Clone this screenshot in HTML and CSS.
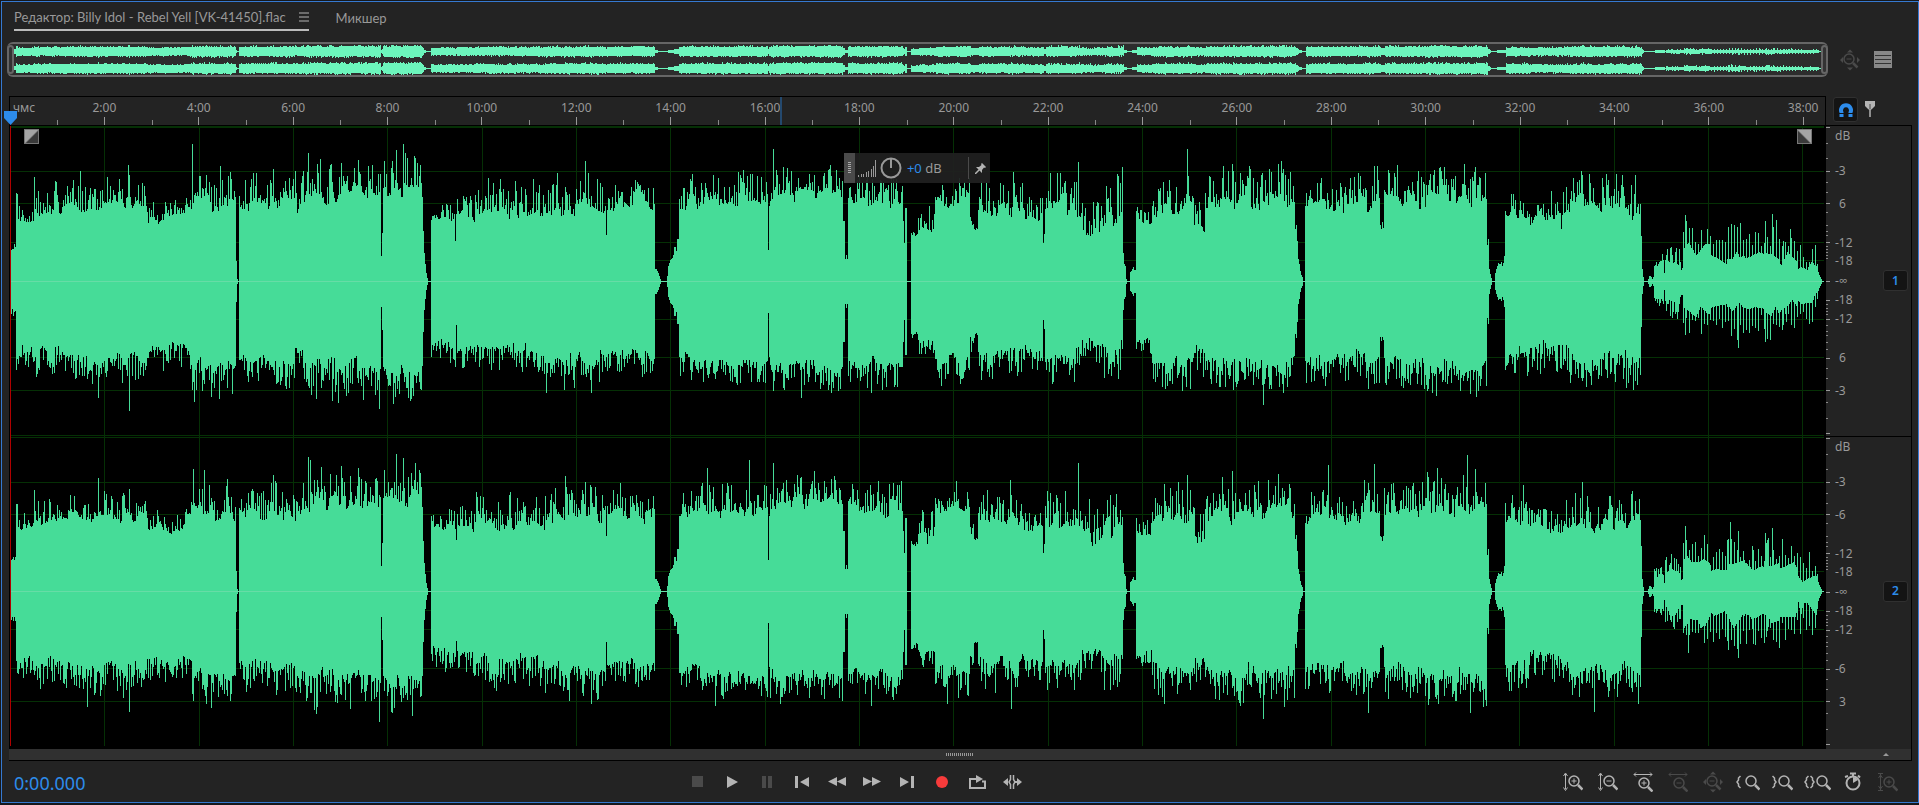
FILE: index.html
```html
<!DOCTYPE html>
<html lang="ru">
<head>
    <meta charset="UTF-8">
    <meta name="viewport" content="width=device-width, initial-scale=1.0">
    <title>Редактор: Billy Idol - Rebel Yell</title>
    <link rel="stylesheet" href="styles.css">
</head>
<body>
    <svg width="0" height="0" class="defs">
        <defs>
            <g id="lens"><circle cx="0" cy="0" r="5" stroke-width="1.500" /><path d="M4 4L8.500 8.500" stroke-width="2.500" /></g>
            <g id="brace-open"><path d="M2.500 -6L.5 -4V-2L-1 0L.5 2V4L2.500 6" stroke-width="1.500" /></g>
            <g id="brace-close"><path d="M-2.500 -6L-.5 -4V-2L1 0L-.5 2V4L-2.500 6" stroke-width="1.500" /></g>
        </defs>
    </svg>

    <div class="panel">
        <nav class="tabs">
            <div class="tab active">
                <a href="#editor">Редактор: Billy Idol - Rebel Yell [VK-41450].flac</a>
                <button class="tab-menu" aria-label="Меню">
                    <svg width="10" height="10" viewBox="0 0 10 10"><path d="M0 1h10M0 5h10M0 9h10" /></svg>
                </button>
            </div>
            <div class="tab"><a href="#mixer">Микшер</a></div>
        </nav>

        <div class="overview-row">
            <div class="overview">
                <span class="handle"></span>
                <svg id="overview" viewBox="14 0 1806 30" preserveAspectRatio="none"></svg>
                <span class="handle"></span>
            </div>
            <div class="overview-tools">
                <button class="dim" aria-label="Уменьшить полностью">
                    <svg width="22" height="22" viewBox="-11 -11 22 22"><g transform="translate(-1 -1)"><use href="#lens" /><path d="M-2.500 0h5" /></g><path class="fill" d="M-10 0l3-3v6zM10 0l-3-3v6zM0 -10.500l3 3h-6zM0 10.500l3-3h-6z" /></svg>
                </button>
                <button aria-label="Список">
                    <svg width="18" height="17" viewBox="0 0 18 17"><rect class="fill" width="18" height="17" /><path d="M1 4.500h16M1 8.500h16M1 12.500h16" stroke="#333" /></svg>
                </button>
            </div>
        </div>

        <main class="editor" id="editor">
            <div class="ruler" id="ruler">
                <span class="units">чмс</span>
            </div>
            <div class="ruler-tools">
                <button class="boxed" aria-label="Привязка">
                    <svg width="16" height="17" viewBox="0 0 16 17"><path d="M3.500 16V11.500A5 5 0 1 1 12.500 11.500V16" stroke="#2d8ceb" stroke-width="4" /><path d="M1 12.500h5M10 12.500h5" stroke="#141414" /></svg>
                </button>
                <button aria-label="Маркер">
                    <svg width="10" height="18" viewBox="0 0 10 18"><path class="fill" d="M0 1h10v5l-3.500 3.500h-3L0 6z" /><path d="M5 6v11" stroke-width="1.500" /><path d="M5 4v5" stroke="#444" /></svg>
                </button>
            </div>

            <div class="waves">
                <svg class="channel" id="left" viewBox="10 0 1815 310" preserveAspectRatio="none"></svg>
                <svg class="channel" id="right" viewBox="10 0 1815 310" preserveAspectRatio="none"></svg>

                <button class="fade fade-in" aria-label="Нарастание">
                    <svg width="15" height="15" viewBox="0 0 15 15"><rect width="15" height="15" fill="#777" /><path d="M1 1h13L1 14z" fill="#a5a5a5" /><path d="M14 2v12H2z" fill="#3a3a3a" /></svg>
                </button>
                <button class="fade fade-out" aria-label="Затухание">
                    <svg width="15" height="15" viewBox="0 0 15 15"><rect width="15" height="15" fill="#777" /><path d="M14 1H1l13 13z" fill="#a5a5a5" /><path d="M1 2v12h12z" fill="#3a3a3a" /></svg>
                </button>

                <div class="hud">
                    <span class="hud-grip"><i></i></span>
                    <svg width="18" height="17" viewBox="0 0 18 17"><path d="M.5 17v-2M3.500 17v-3M5.500 17v-3M8.500 17v-5M10.500 17v-6M13.500 17v-8M15.500 17v-11M17.500 17V0" /></svg>
                    <svg width="22" height="22" viewBox="0 0 22 22"><circle cx="11" cy="11" r="9.500" stroke="#999" stroke-width="2" /><path d="M11 1v10" stroke="#999" stroke-width="2" /></svg>
                    <span class="gain"><b>+0</b> dB</span>
                    <button class="pin" aria-label="Закрепить">
                        <svg width="11" height="11" viewBox="0 0 11 11"><path class="fill" d="M7 0l4 4-1 1-1-.5-2 2.500v3L3.500 6.500 1 4h3l2.500-2L6 1z" /><path d="M0 11L5 6" stroke-width="1.500" /></svg>
                    </button>
                </div>
            </div>

            <div class="scales">
                <div class="scale">
                    <svg class="decibels" id="scale1" width="40" height="100%"></svg>
                    <button class="boxed channel-btn">1</button>
                </div>
                <div class="scale">
                    <svg class="decibels" id="scale2" width="40" height="100%"></svg>
                    <button class="boxed channel-btn">2</button>
                </div>
            </div>

            <div class="scrollbar">
                <i class="grip"></i>
                <svg width="6" height="3" viewBox="0 0 6 3"><path class="fill" d="M0 3L3 0L6 3z" /></svg>
            </div>
        </main>

        <footer class="controls">
            <output class="time">0:00.000</output>
            <div class="transport">
                <button class="dim" aria-label="Стоп"><svg width="11" height="11"><rect class="fill" width="11" height="11" /></svg></button>
                <button aria-label="Воспроизвести"><svg width="11" height="12"><path class="fill" d="M0 0L11 6L0 12z" /></svg></button>
                <button class="dim" aria-label="Пауза"><svg width="10" height="12"><path class="fill" d="M0 0h4v12H0zM6 0h4v12H6z" /></svg></button>
                <button aria-label="К началу"><svg width="14" height="12"><path class="fill" d="M0 0h3v12H0zM14 1v10L5 6z" /></svg></button>
                <button aria-label="Назад"><svg width="18" height="9"><path class="fill" d="M9 0v9L0 4.500zM18 0v9L9 4.500z" /></svg></button>
                <button aria-label="Вперёд"><svg width="18" height="9"><path class="fill" d="M0 0v9l9-4.500zM9 0v9l9-4.500z" /></svg></button>
                <button aria-label="К концу"><svg width="14" height="12"><path class="fill" d="M11 0h3v12h-3zM0 1v10l9-5z" /></svg></button>
                <button class="record" aria-label="Запись"><svg width="12" height="12"><circle class="fill" cx="6" cy="6" r="6" /></svg></button>
                <button aria-label="Цикл"><svg width="17" height="14"><path d="M5 4H1v9h15V6.500h-3" stroke-width="2" /><path d="M3 4h6" stroke-width="2" /><path class="fill" d="M7 0l7 4-7 4z" /></svg></button>
                <button aria-label="Пропуск"><svg width="19" height="14"><path class="fill" d="M5 3v8L0 7z" /><path d="M7.500 0v4.500L6 7l1.500 2.500V14M10.500 0v4.500L12 7l-1.500 2.500V14" stroke-width="1.500" /><path d="M12 7h3" stroke-width="2" /><path class="fill" d="M14 3l5 4-5 4z" /></svg></button>
            </div>
            <div class="zooms">
                <button aria-label="Увеличить амплитуду"><svg width="20" height="20"><path d="M2.500 2v15M.5 4l2-3 2 3M.5 15.500l2 3 2-3M11 6.500v5M8.500 9h5" /><use href="#lens" x="11" y="9" /></svg></button>
                <button aria-label="Уменьшить амплитуду"><svg width="20" height="20"><path d="M2.500 2v15M.5 4l2-3 2 3M.5 15.500l2 3 2-3M8.500 9h5" /><use href="#lens" x="11" y="9" /></svg></button>
                <button aria-label="Увеличить время"><svg width="20" height="20"><path d="M1 2.500h18M3 .5l-2 2 2 2M17 .5l2 2-2 2M11 8.500v5M8.500 11h5" /><use href="#lens" x="11" y="11" /></svg></button>
                <button class="dim" aria-label="Уменьшить время"><svg width="20" height="20"><path d="M1 2.500h18M3 .5l-2 2 2 2M17 .5l2 2-2 2M8.500 11h5" /><use href="#lens" x="11" y="11" /></svg></button>
                <button class="dim" aria-label="Показать всё"><svg width="22" height="22" viewBox="-11 -11 22 22"><g transform="translate(-1 -1)"><use href="#lens" /><path d="M-2.500 0h5" /></g><path class="fill" d="M-10 0l3-3v6zM10 0l-3-3v6zM0 -10.500l3 3h-6zM0 10.500l3-3h-6z" /></svg></button>
                <button aria-label="К точке входа"><svg width="24" height="18"><use href="#brace-open" x="2" y="9" /><use href="#lens" x="15" y="8" /></svg></button>
                <button aria-label="К точке выхода"><svg width="21" height="18"><use href="#brace-close" x="3" y="9" /><use href="#lens" x="12" y="8" /></svg></button>
                <button aria-label="К выделению"><svg width="27" height="18"><use href="#brace-open" x="2" y="9" /><use href="#brace-close" x="9" y="9" /><use href="#lens" x="18" y="8" /></svg></button>
                <button aria-label="По времени"><svg width="17" height="19"><circle cx="9" cy="11" r="6.500" stroke-width="2" /><path d="M6 1.500h6M9 1v4M1 5l3-1M14 3.500l2 2" stroke-width="2" /><path class="fill" d="M9 11V5A6 6 0 0 1 14 8z" /></svg></button>
                <button class="dim" aria-label="По высоте"><svg width="20" height="20"><path d="M0 1.500h5M0 18.500h5M2.500 2v16M.5 6l2-3 2 3M.5 14l2 3 2-3M11 7.500v5M8.500 10h5" /><use href="#lens" x="11" y="10" /></svg></button>
            </div>
        </footer>
    </div>

    <script src="script.js"></script>
</body>
</html>
```
FILE: styles.css
```css
:root {
    --bg: #232323;
    --line: #000;
    --text: #999;
    --icon: #b4b4b4;
    --dim: #4a4a4a;
    --blue: #2d8ceb;
}

* {
    margin: 0;
    padding: 0;
    box-sizing: border-box;
}

body {
    font-family: "Noto Sans", "Open Sans", sans-serif;
    font-size: 12px;
    line-height: 16px;
    color: var(--text);
    background: #16181c;
    height: 100vh;
    padding: 1px 0 2px 1px;
    overflow: hidden;
}

button {
    display: flex;
    align-items: center;
    justify-content: center;
    background: none;
    border: none;
    color: var(--icon);
    font: inherit;
    cursor: pointer;
}

button.dim {
    color: var(--dim);
}

svg {
    display: block;
    fill: none;
    stroke: currentColor;
    flex-shrink: 0;
}

.fill {
    fill: currentColor;
    stroke: none;
}

.defs {
    position: absolute;
}

.panel {
    height: 100%;
    display: flex;
    flex-direction: column;
    background: var(--bg);
    border: 1px solid #3579d0;
}

/* tabs */
.tabs {
    display: flex;
    gap: 27px;
    height: 40px;
    padding: 7px 12px 0;
    font-family: Lato, "Noto Sans", sans-serif;
    font-size: 13px;
}

.tab {
    display: flex;
    align-items: center;
    gap: 13px;
    height: 22px;
    padding-bottom: 4px;
}

.tab a {
    color: var(--text);
    text-decoration: none;
    white-space: nowrap;
}

.tab.active {
    border-bottom: 2px solid #bbb;
}

/* overview */
.overview-row {
    display: flex;
    height: 35px;
    padding-left: 5px;
}

.overview {
    flex: 1;
    min-width: 0;
    display: flex;
    align-items: center;
    background: #2d2d2d;
    border: 2px solid #666;
    border-width: 2px 0;
    border-radius: 6px;
}

.overview svg {
    flex: 1;
    min-width: 0;
    height: 31px;
}

.handle {
    width: 7px;
    height: 29px;
    border: 2px solid #666;
    border-radius: 4px;
    background: #333;
    flex-shrink: 0;
}

.overview-tools {
    display: flex;
    align-items: center;
    flex-shrink: 0;
    gap: 13px;
    width: 90px;
    padding-left: 11px;
}

.overview-tools button:last-child {
    color: #888;
}

/* editor */
.editor {
    flex: 1;
    min-height: 0;
    display: grid;
    grid-template-columns: 1fr 86px;
    grid-template-rows: 30px 1fr 12px;
    margin: 19px 6px 0 7px;
}

.ruler {
    display: flex;
    overflow: hidden;
    border: 1px solid var(--line);
    position: relative;
}

.units {
    flex: 0 0 2.600%;
    padding: 3px 0 0 3px;
}

.mark {
    flex: 0 0 5.200%;
    text-align: center;
    padding-top: 3px;
    background:
        linear-gradient(#999, #999) 50% 100% / 1px 8px no-repeat,
        linear-gradient(#888, #888) 0 100% / 1px 5px no-repeat;
}

.cursor-line {
    position: absolute;
    left: 42.450%;
    top: 0;
    width: 2px;
    height: 100%;
    background: #24496e;
}

.playhead {
    position: absolute;
    left: 4px;
    top: 111px;
}

.ruler-tools {
    display: flex;
    align-items: center;
    gap: 7px;
    padding-left: 7px;
    padding-bottom: 3px;
    border-bottom: 1px solid var(--line);
}

.boxed {
    width: 25px;
    height: 25px;
    background: #141414;
    border: 1px solid #303030;
    border-radius: 3px;
}

.waves {
    position: relative;
    display: flex;
    flex-direction: column;
    min-height: 0;
    padding: 0 1px 3px 1px;
    background: #000;
}

.channel {
    flex: 1;
    min-height: 0;
    width: 100%;
}

.fade {
    position: absolute;
    top: 3px;
}

.fade svg {
    stroke: none;
}

.fade-in {
    left: 15px;
}

.fade-out {
    right: 14px;
}

.hud {
    position: absolute;
    top: 27px;
    left: 45.950%;
    width: 146px;
    height: 30px;
    display: flex;
    align-items: center;
    background: rgba(32, 32, 32, 0.940);
}

.hud-grip {
    width: 11px;
    height: 30px;
    margin-right: 3px;
    padding: 9px 4px;
    background: #4a4a4a;
}

.hud-grip i {
    display: block;
    width: 3px;
    height: 12px;
    background: repeating-linear-gradient(#aaa 0 1px, transparent 1px 2px);
}

.hud svg + svg {
    margin-left: 4px;
}

.gain {
    margin-left: 5px;
    font-size: 13px;
    flex: 1;
}

.gain b {
    font-weight: 400;
    color: var(--blue);
}

.pin {
    height: 22px;
    padding: 0 4px 0 6px;
    border-left: 1px solid #4a4a4a;
}

.scales {
    display: flex;
    flex-direction: column;
    min-height: 0;
    padding-bottom: 3px;
    border-right: 1px solid var(--line);
}

.scale {
    flex: 1;
    min-height: 0;
    display: flex;
    align-items: center;
    gap: 17px;
}

.scale + .scale {
    border-top: 1px solid var(--line);
}

.decibels {
    height: 100%;
}

.decibels text {
    fill: var(--text);
    stroke: none;
}

.channel-btn {
    height: 21px;
    color: var(--blue);
    font-weight: 600;
}

.scrollbar {
    grid-column: 1 / 3;
    display: flex;
    align-items: center;
    justify-content: flex-end;
    gap: 909px;
    padding-right: 22px;
    background: #303030;
    border-bottom: 1px solid var(--line);
    border-right: 1px solid var(--line);
}

.grip {
    width: 28px;
    height: 3px;
    background: repeating-linear-gradient(90deg, #999 0 1px, transparent 1px 2px);
}

/* bottom bar */
.controls {
    display: flex;
    align-items: center;
    height: 41px;
    padding: 0 13px 0 12px;
}

.time {
    width: 35.200%;
    padding-top: 3px;
    font-size: 18px;
    line-height: 24px;
    color: var(--blue);
}

.transport,
.zooms {
    display: flex;
}

.transport {
    flex: 1;
}

.transport button,
.zooms button {
    width: 35px;
    height: 30px;
}

.transport .record {
    color: #f73b3b;
}
```
FILE: script.js
```js
const SVG = "http://www.w3.org/2000/svg";

// start, top low, top high, bottom low, bottom high
const segments = [
    [11, 31, 36, 26, 33], [16, 85, 93, 66, 90], [18, 60, 84, 66, 88],
    [35, 66, 98, 68, 100], [60, 72, 102, 74, 103], [115, 72, 100, 72, 103],
    [147, 60, 80, 62, 88], [185, 72, 90, 66, 88], [192, 80, 108, 80, 118],
    [210, 74, 108, 80, 112], [239, 74, 108, 70, 104], [270, 74, 110, 72, 106],
    [305, 82, 126, 78, 116], [345, 84, 122, 80, 116], [383, 88, 126, 86, 120],
    [431, 62, 76, 56, 78], [445, 62, 85, 62, 88], [475, 66, 102, 64, 96],
    [545, 70, 108, 74, 108], [600, 72, 106, 70, 96], [655, 1, 1, 1, 1],
    [679, 76, 104, 74, 98], [700, 78, 112, 80, 104], [768, 84, 118, 82, 110],
    [848, 78, 112, 78, 106], [907, 1, 1, 1, 1], [911, 45, 50, 50, 62],
    [918, 52, 80, 58, 76], [935, 78, 108, 74, 104], [970, 56, 76, 56, 80],
    [974, 51, 54, 50, 58], [978, 66, 102, 68, 100], [1023, 60, 85, 64, 86],
    [1045, 66, 108, 68, 103], [1082, 50, 90, 58, 80], [1104, 56, 108, 60, 98],
    [1123, 1, 1, 1, 1], [1136, 56, 74, 58, 74], [1152, 70, 106, 74, 110],
    [1194, 52, 86, 60, 92], [1205, 74, 116, 76, 112], [1295, 1, 1, 1, 1],
    [1305, 72, 104, 72, 104], [1361, 76, 114, 76, 108], [1380, 50, 58, 54, 60],
    [1384, 76, 112, 74, 106], [1425, 78, 116, 80, 112], [1487, 1, 1, 1, 1],
    [1505, 66, 94, 66, 96], [1530, 60, 90, 60, 92], [1570, 66, 106, 74, 104],
    [1600, 64, 104, 70, 106], [1641, 1, 1, 1, 1], [1654, 16, 29, 16, 24],
    [1664, 8, 8, 8, 8], [1665, 18, 38, 16, 40], [1681, 11, 14, 13, 13],
    [1683, 24, 60, 24, 54], [1710, 16, 46, 18, 50], [1727, 20, 58, 20, 60],
    [1745, 18, 50, 18, 56], [1765, 18, 62, 20, 58], [1780, 14, 52, 16, 54],
    [1797, 9, 40, 10, 44], [1817, 1, 1, 1, 1]
];

// the last track is sparse, its peaks come every few columns
const sparseFrom = 1683;

// fades between the songs, one value per pixel column
const fades = {
    235: [84, 20, 2, 1],
    381: [25, 48],
    422: [84, 50, 28, 17, 8, 3, 1, 1, 1],
    655: [12, 12, 10, 8, 5, 2, 1, 1, 1, 1, 1, 1, 5, 15, 18, 21, 22, 23, 26, 34, 34, 30, 42, 42],
    768: [31, 75],
    843: [60, 60, 22, 26, 22],
    903: [60, 38, 73, 73],
    1043: [38, 47],
    1123: [28, 17, 15, 2, 1, 1, 1, 9, 10, 12, 14, 11, 11],
    1295: [52, 56, 40, 22, 17, 10, 6, 4, 1, 1],
    1487: [36, 42, 12, 7, 3, 1, 1, 1, 8, 12, 15, 18, 17, 17, 19, 15, 18, 25],
    1641: [45, 12, 4, 1, 1, 1, 1, 2, 5, 5, 4, 2, 4],
    1817: [17, 9, 6, 4, 2, 1]
};

const spikes = {
    left: {
        top: { 34: 104, 80: 110, 128: 116, 129: 106, 192: 137, 220: 115, 273: 112, 308: 128, 320: 122, 330: 116, 372: 116, 392: 120, 396: 131, 403: 137, 455: 40, 488: 103, 533: 102, 585: 120, 607: 71, 606: 46, 773: 132, 787: 113, 830: 116, 1013: 109, 1078: 119, 1117: 107, 1187: 132, 1232: 117, 1374: 115, 1418: 110, 1464: 117, 1561: 52, 1589: 107, 1616: 107, 1635: 106, 1685: 66, 1731: 57, 1765: 60, 1772: 67, 1790: 52 },
        bottom: { 98: 116, 129: 129, 194: 120, 211: 115, 219: 117, 316: 117, 332: 119, 379: 127, 411: 117, 456: 43, 591: 111, 801: 116, 871: 111, 1263: 123, 1283: 111, 1368: 107, 1470: 112, 1586: 105, 1626: 106, 1685: 53, 1738: 66, 1765: 60 }
    },
    right: {
        top: { 34: 101, 98: 113, 129: 102, 193: 122, 204: 121, 273: 116, 308: 134, 310: 131, 321: 124, 341: 125, 358: 123, 396: 137, 403: 133, 415: 128, 419: 121, 456: 51, 565: 115, 585: 109, 606: 55, 707: 123, 749: 131, 773: 128, 1010: 111, 1078: 128, 1187: 116, 1232: 120, 1278: 117, 1328: 126, 1374: 127, 1437: 123, 1467: 136, 1475: 122, 1523: 106, 1582: 109, 1685: 65, 1730: 69, 1738: 60, 1765: 58, 1772: 63 },
        bottom: { 87: 115, 129: 120, 211: 116, 316: 122, 379: 130, 412: 124, 456: 49, 591: 112, 606: 50, 715: 114, 871: 114, 947: 112, 1011: 117, 1263: 127, 1368: 121, 1470: 121, 1594: 120, 1638: 112, 1688: 61, 1738: 66 }
    }
};

function random(seed) {
    return function () {
        seed = (seed * 1664525 + 1013904223) % 4294967296;
        return seed / 4294967296;
    };
}

// slow drift that the fast peaks ride on
function drift(rnd) {
    let from = rnd(), to = rnd(), step = 0, length = 4;
    return function () {
        if (step++ >= length) {
            from = to;
            to = rnd();
            step = 1;
            length = 2 + Math.floor(rnd() * 6);
        }
        return from + (to - from) * step / length;
    };
}

function buildWave(seed, extra) {
    const rnd = random(seed);
    const slowTop = drift(rnd), slowBottom = drift(rnd);
    const wave = [];
    for (let i = 0; i < segments.length; i++) {
        const [start, tLo, tHi, bLo, bHi] = segments[i];
        const end = i + 1 < segments.length ? segments[i + 1][0] : 1823;
        for (let x = start; x < end; x++) {
            let t, b;
            if (x >= sparseFrom) {
                const peak = x % 3 === 0 || rnd() < 0.1;
                t = peak ? 0.3 + 0.7 * rnd() : 0.4 * slowTop();
                b = peak ? 0.4 + 0.6 * rnd() : 0.4 * slowBottom();
            } else {
                t = -0.2 + 0.5 * slowTop() + 0.9 * Math.pow(rnd(), 2.2);
                b = -0.2 + 0.5 * slowBottom() + 0.9 * Math.pow(rnd(), 1.8);
            }
            wave[x] = [tLo + (tHi - tLo) * t, bLo + (bHi - bLo) * b];
        }
    }
    for (const start in fades) {
        fades[start].forEach((v, i) => { wave[+start + i] = [v, v]; });
    }
    for (const x in extra.top) wave[x][0] = extra.top[x];
    for (const x in extra.bottom) wave[x][1] = extra.bottom[x];
    return wave;
}

function add(parent, name, attrs) {
    const el = document.createElementNS(SVG, name);
    for (const key in attrs) el.setAttribute(key, attrs[key]);
    parent.appendChild(el);
    return el;
}

function wavePath(wave, center, scale, limit) {
    let d = "";
    wave.forEach(([t, b], x) => {
        const up = t <= 1 ? 0 : Math.min(limit, Math.round(t * scale));
        const down = b <= 1 ? 0 : Math.min(limit, Math.round(b * scale));
        d += `M${x} ${center - up}h1v${up + down + 1}h-1z`;
    });
    return d;
}

function drawChannel(id, wave, rows) {
    const svg = document.getElementById(id);
    const grid = "#053005";
    svg.setAttribute("shape-rendering", "crispEdges");
    svg.style.stroke = "none";
    rows.forEach(y => add(svg, "rect", { x: 11, y: y, width: 1813, height: 1, fill: grid }));
    for (let i = 0; i < 19; i++) {
        add(svg, "rect", { x: Math.round(104.3 + i * 94.33), y: 0, width: 1, height: 310, fill: grid });
    }
    add(svg, "path", { d: wavePath(wave, 155, 1, 150), fill: "#46dc98" });
    add(svg, "rect", { x: 11, y: 155, width: 1813, height: 1, fill: "#66dda6" });
    add(svg, "rect", { x: 10, y: 0, width: 1, height: 310, fill: "#b00000" });
}

const left = buildWave(7, spikes.left);
const right = buildWave(91, spikes.right);
drawChannel("left", left, [0, 1, 45, 77, 116, 134, 193, 231, 264, 309]);
drawChannel("right", right, [1, 46, 78, 135, 174, 193, 232, 265]);

const overview = document.getElementById("overview");
overview.style.stroke = "none";
overview.setAttribute("shape-rendering", "crispEdges");
[[left, 7], [right, 23]].forEach(([wave, center]) => {
    add(overview, "path", { d: wavePath(wave.slice(0, 1820), center, 0.052, 6), fill: "#6cf5bc" });
});

// time ruler
const ruler = document.getElementById("ruler");
for (let m = 2; m <= 38; m += 2) {
    const mark = document.createElement("span");
    mark.className = "mark";
    mark.textContent = m + ":00";
    ruler.appendChild(mark);
}
const line = document.createElement("i");
line.className = "cursor-line";
ruler.appendChild(line);
const head = add(document.querySelector(".panel"), "svg", { class: "playhead", width: 13, height: 14 });
add(head, "path", { class: "fill", d: "M0 0h13v7L6.500 14L0 7z", style: "color:#2d8ceb" });

// decibel scale, positions as a share of the channel height
const small = [17, 32, 56, 66, 86, 99, 105, 109, 120, 123, 126, 129, 132, 178, 182, 185, 188, 199, 205, 209, 216, 223, 242, 252, 276, 292];
const large = [1, 45, 77, 116, 155, 174, 193, 232, 264, 308];
function drawScale(id, labels) {
    const svg = document.getElementById(id);
    svg.setAttribute("shape-rendering", "crispEdges");
    svg.style.stroke = "none";
    const pct = y => (y / 3.1).toFixed(2) + "%";
    small.forEach(y => add(svg, "rect", { x: 0, y: pct(y), width: 2, height: 1, fill: "#888" }));
    large.forEach(y => add(svg, "rect", { x: 0, y: pct(y), width: 4, height: 1, fill: "#999" }));
    labels.forEach(([y, text]) => {
        const el = add(svg, "text", { x: /^\d/.test(text) ? 13 : 9, y: pct(y), dy: 4 });
        el.textContent = text;
    });
}
drawScale("scale1", [[10, "dB"], [45, "-3"], [78, "6"], [117, "-12"], [135, "-18"], [155, "-∞"], [174, "-18"], [193, "-12"], [232, "6"], [265, "-3"]]);
drawScale("scale2", [[10, "dB"], [45, "-3"], [78, "-6"], [117, "-12"], [135, "-18"], [155, "-∞"], [174, "-18"], [193, "-12"], [232, "-6"], [265, "3"]]);
```
